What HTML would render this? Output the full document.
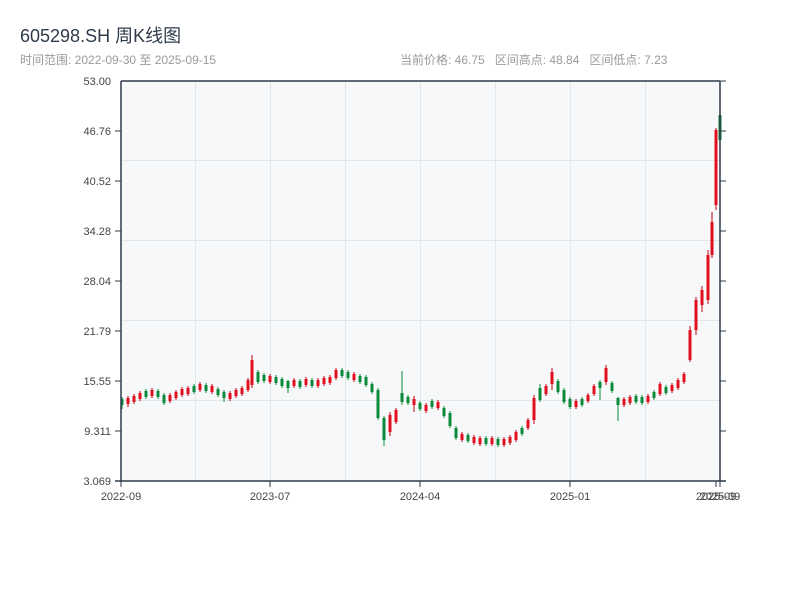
<!DOCTYPE html>
<html><head><meta charset="utf-8"><style>
body{margin:0;width:800px;height:600px;background:#fff;font-family:"Liberation Sans","Noto Sans CJK SC",sans-serif;overflow:hidden;position:relative}
.t{position:absolute;left:20px;top:22px;font-size:18px;color:#2f3b4a}
.s{position:absolute;top:51px;font-size:12px;color:#9a9a9a}
</style></head><body>
<div class="t">605298.SH 周K线图</div>
<div class="s" style="left:20px">时间范围: 2022-09-30 至 2025-09-15</div>
<div class="s" style="left:400px">当前价格: 46.75&nbsp;&nbsp; 区间高点: 48.84&nbsp;&nbsp; 区间低点: 7.23</div>
<svg width="800" height="600" style="position:absolute;left:0;top:0" xmlns="http://www.w3.org/2000/svg" font-family="Liberation Sans, sans-serif" font-size="11" fill="#444">
<rect x="121" y="81" width="599" height="400" fill="#f6f8fa"/>
<g stroke="#e2e5ea" stroke-width="1">
<line x1="195.5" y1="81" x2="195.5" y2="481"/><line x1="270.5" y1="81" x2="270.5" y2="481"/><line x1="345.5" y1="81" x2="345.5" y2="481"/><line x1="420.5" y1="81" x2="420.5" y2="481"/><line x1="495.5" y1="81" x2="495.5" y2="481"/><line x1="570.5" y1="81" x2="570.5" y2="481"/><line x1="645.5" y1="81" x2="645.5" y2="481"/>
<line x1="121" y1="160.5" x2="720" y2="160.5"/><line x1="121" y1="240.5" x2="720" y2="240.5"/><line x1="121" y1="320.5" x2="720" y2="320.5"/><line x1="121" y1="400.5" x2="720" y2="400.5"/>
</g>
<path fill="none" stroke="#c00010" stroke-width="1" d="M128 396V407M134 394V404M140 391V401M152 388V398M170 393V403M176 390V400M182 387V397M188 386V396M200 382V392M212 384V394M230 391V401M236 388V398M242 386V396M248 378V392M252 355V388M270 374V384M294 378V388M306 377V387M318 378V388M324 376V386M330 375V385M336 368V380M354 372V382M390 412V436M396 408V424M414 396V412M426 403V413M438 400V410M462 432V442M474 435V445M480 436V446M492 436V446M504 437V447M510 435V445M516 430V442M528 418V430M534 395V424M546 384V396M552 368V390M576 399V409M588 393V403M594 384V396M606 365V385M624 397V407M630 395V405M648 394V404M660 382V396M672 383V393M678 378V390M684 372V384M690 326V362M696 297V335M702 286V312M708 250V304M712 212V258M716 128V210"/>
<path fill="none" stroke="#e0101e" stroke-width="3" d="M128 398V404M134 396V402M140 393V399M152 390V396M170 395V401M176 392V398M182 389V395M188 388V394M200 384V390M212 386V392M230 393V399M236 390V396M242 388V394M248 380V390M252 360V385M270 376V382M294 380V386M306 379V385M318 380V386M324 378V384M330 377V383M336 370V378M354 374V380M390 415V432M396 410V422M414 399V405M426 405V411M438 402V408M462 434V440M474 437V443M480 438V444M492 438V444M504 439V445M510 437V443M516 432V440M528 420V428M534 398V420M546 386V394M552 372V384M576 401V407M588 395V401M594 386V394M606 368V382M624 399V405M630 397V403M648 396V402M660 384V394M672 385V391M678 380V388M684 374V382M690 330V360M696 300V330M702 290V305M708 255V300M712 222V255M716 130V205"/>
<path fill="none" stroke="#0a8a3a" stroke-width="1" d="M122 397V409M146 389V399M158 389V399M164 393V405M194 384V394M206 383V393M218 387V397M224 390V402M258 370V384M264 373V383M276 375V385M282 377V388M288 380V393M300 379V389M312 378V388M342 368V378M348 370V380M360 374V384M366 375V387M372 382V394M378 388V420M384 416V446M402 371V405M408 395V405M420 401V411M432 399V409M444 406V418M450 411V428M456 426V440M468 433V443M486 436V446M498 437V447M522 426V436M540 384V402M558 379V394M564 388V404M570 397V409M582 397V407M600 380V400M612 381V393M618 397V421M636 394V404M642 395V405M654 390V400M666 385V395M720 113V142"/>
<path fill="none" stroke="#0a8a3a" stroke-width="3" d="M122 399V405M146 391V397M158 391V397M164 395V403M194 386V392M206 385V391M218 389V395M224 392V398M258 372V382M264 375V381M276 377V383M282 379V386M288 381V388M300 381V387M312 380V386M342 370V376M348 372V378M360 376V382M366 377V385M372 384V392M378 390V418M384 418V440M402 393V402M408 397V403M420 403V409M432 401V407M444 408V416M450 413V426M456 428V438M468 435V441M486 438V444M498 439V445M522 428V434M540 388V400M558 381V392M564 390V402M570 399V407M582 399V405M600 382V388M612 383V391M618 398V405M636 396V402M642 397V403M654 392V398M666 387V393M720 115V140"/>
<g stroke="#2d3a4a" stroke-width="1.5" fill="none">
<line x1="121" y1="81" x2="121" y2="482"/><line x1="720" y1="81" x2="720" y2="482"/><line x1="115" y1="481" x2="726" y2="481"/><line x1="121" y1="81" x2="720" y2="81"/>
</g>
<g stroke="#2d3a4a" stroke-width="1">
<line x1="115" y1="131" x2="121" y2="131"/><line x1="115" y1="181" x2="121" y2="181"/><line x1="115" y1="231" x2="121" y2="231"/><line x1="115" y1="281" x2="121" y2="281"/><line x1="115" y1="331" x2="121" y2="331"/><line x1="115" y1="381" x2="121" y2="381"/><line x1="115" y1="431" x2="121" y2="431"/>
<line x1="720" y1="131" x2="726" y2="131"/><line x1="720" y1="181" x2="726" y2="181"/><line x1="720" y1="231" x2="726" y2="231"/><line x1="720" y1="281" x2="726" y2="281"/><line x1="720" y1="331" x2="726" y2="331"/><line x1="720" y1="381" x2="726" y2="381"/><line x1="720" y1="431" x2="726" y2="431"/><line x1="720" y1="81" x2="726" y2="81"/>
<line x1="121" y1="481" x2="121" y2="487"/><line x1="270" y1="481" x2="270" y2="487"/><line x1="420" y1="481" x2="420" y2="487"/><line x1="570" y1="481" x2="570" y2="487"/><line x1="716" y1="481" x2="716" y2="487"/><line x1="720" y1="481" x2="720" y2="487"/>
</g>
<g text-anchor="end">
<text x="111" y="85">53.00</text><text x="111" y="135">46.76</text><text x="111" y="185">40.52</text><text x="111" y="235">34.28</text><text x="111" y="285">28.04</text><text x="111" y="335">21.79</text><text x="111" y="385">15.55</text><text x="111" y="435">9.311</text><text x="111" y="485">3.069</text>
</g>
<g text-anchor="middle">
<text x="121" y="500">2022-09</text><text x="270" y="500">2023-07</text><text x="420" y="500">2024-04</text><text x="570" y="500">2025-01</text><text x="716" y="500">2025-09</text><text x="720" y="500">2025-09</text>
</g>
</svg>
</body></html>
